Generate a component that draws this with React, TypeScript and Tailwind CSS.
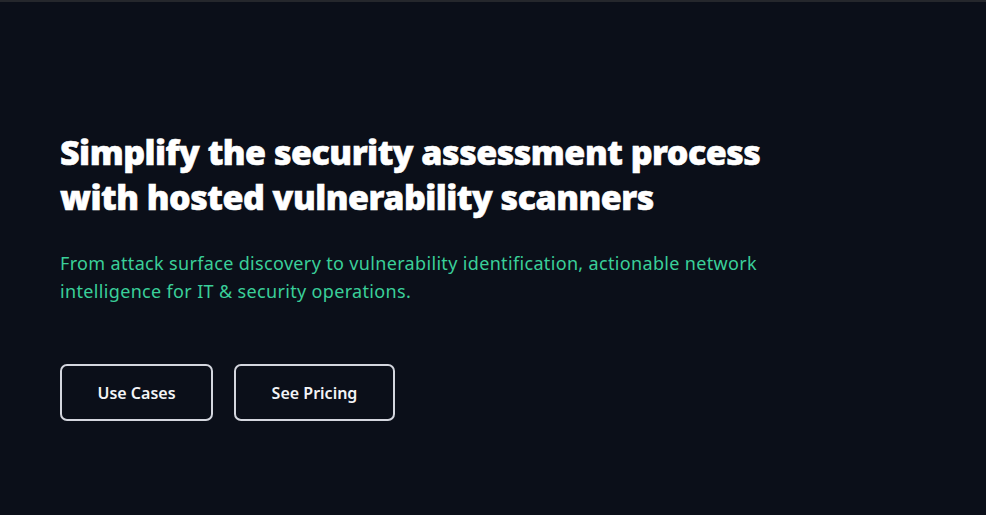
export default function App() {
  return (
    <div className="min-h-[515px] w-full bg-[#0b0f19] border-t-2 border-[#25272c]" style={{ fontFamily: '"Noto Sans", "Open Sans", sans-serif' }}>
      <div className="px-[60px] pt-[128px]">
        <div className="max-w-[768px]">
          <h1 className="text-[34px] leading-[45px] font-black text-white tracking-[-0.5px] [-webkit-text-stroke:0.6px_white]">
            Simplify the security assessment process with hosted vulnerability scanners
          </h1>
          <p className="mt-[29px] text-[18px] leading-[28px] text-[#3acf99] tracking-[0.34px]">
            From attack surface discovery to vulnerability identification, actionable network intelligence for IT &amp; security operations.
          </p>
          <div className="mt-[59px] flex gap-[21px]">
            <button className="h-[57px] w-[153px] rounded-[7px] border-2 border-[#d4d6de] text-[16px] font-semibold text-[#f3f4f6]">
              Use Cases
            </button>
            <button className="h-[57px] w-[161px] rounded-[7px] border-2 border-[#d4d6de] text-[16px] font-semibold text-[#f3f4f6]">
              See Pricing
            </button>
          </div>
        </div>
      </div>
    </div>
  );
}
